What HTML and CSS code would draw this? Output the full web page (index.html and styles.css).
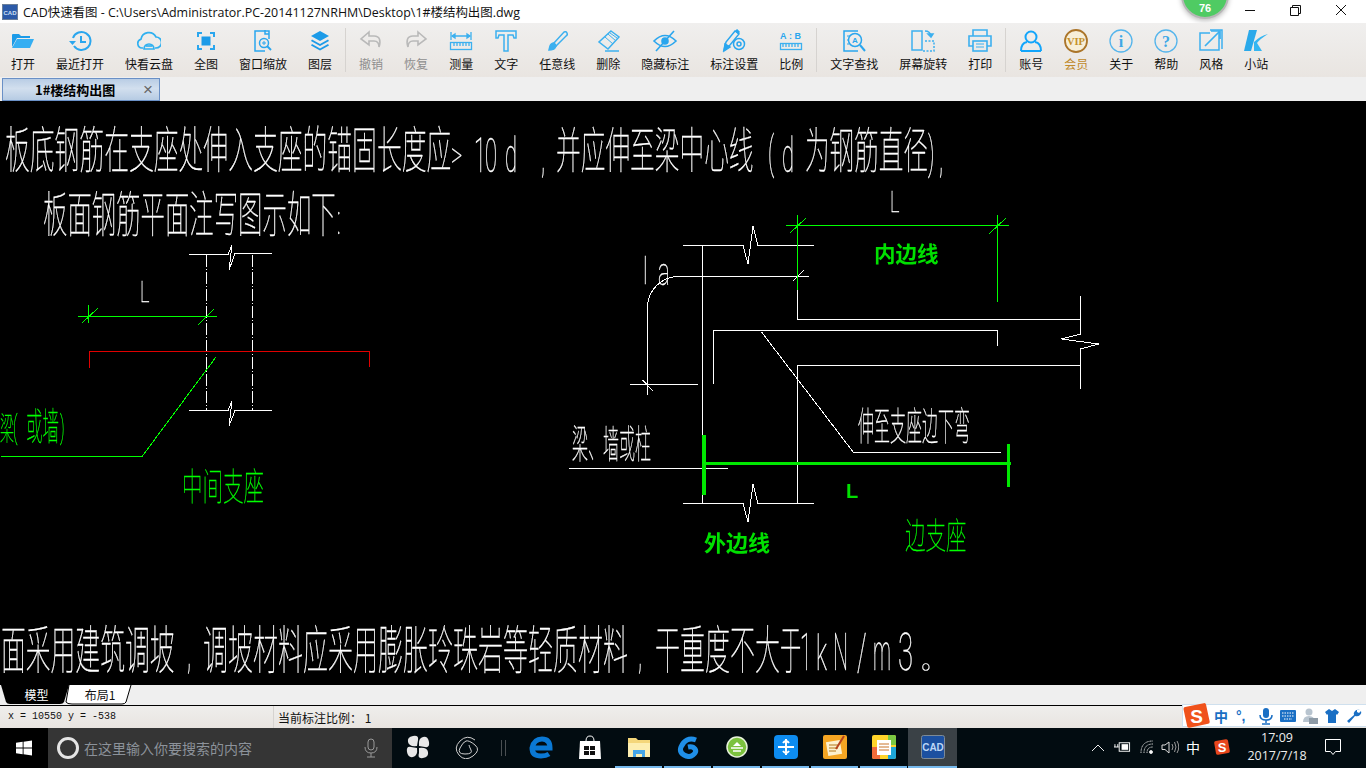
FILE: index.html
```html
<!DOCTYPE html>
<html lang="zh-CN">
<head>
<meta charset="utf-8">
<title>CAD快速看图</title>
<link rel="stylesheet" href="styles.css">
</head>
<body>
<div class="app">
  <header class="titlebar">
    <svg class="app-icon" viewBox="0 0 16 16"><rect x=".5" y=".5" width="15" height="15" fill="#2c5aa8" stroke="#6b7f99"/><text x="8" y="11" class="app-icon-text">CAD</text></svg>
    <span class="title">CAD快速看图 - C:\Users\Administrator.PC-20141127NRHM\Desktop\1#楼结构出图.dwg</span>
    <div class="badge"><span>76</span></div>
    <div class="winctl">
      <svg viewBox="0 0 46 20"><path d="M19 10.500h10" stroke="#111" fill="none"/></svg>
      <svg viewBox="0 0 46 20"><path d="M18.500 7.500h8v8h-8zM20.500 7.500v-2h8v8h-2" stroke="#111" fill="none"/></svg>
      <svg viewBox="0 0 46 20"><path d="M18 5l10 10M28 5L18 15" stroke="#111" fill="none"/></svg>
    </div>
  </header>

  <nav class="toolbar">
    <div class="group">
      <button class="tool"><svg viewBox="0 0 24 24"><path fill="#1c9be8" d="M1 6q0-1 1-1h6l2 2h9v2H6l-5 9z"/><path fill="#35aef2" d="M6 10h17l-4 9H1z"/></svg><span>打开</span></button>
      <button class="tool"><svg viewBox="0 0 24 24" fill="none" stroke="#2aa6ee" stroke-width="2"><path d="M5 9a9 9 0 1 1 1 8"/><path d="M1 12h7l-3.500 4z" fill="#2aa6ee" stroke="none"/><path d="M13 7v6h5"/></svg><span>最近打开</span></button>
      <button class="tool"><svg viewBox="0 0 24 24" fill="none" stroke="#2fb0f0" stroke-width="1.700"><path d="M6 19H5a4.500 4.500 0 0 1-1-8.800A8 8 0 0 1 19 8a5.500 5.500 0 0 1 0 11h-1"/><path d="M7 20a5 5 0 0 1 10 0z"/><path d="M9 17h6"/></svg><span>快看云盘</span></button>
      <button class="tool"><svg viewBox="0 0 24 24" fill="none" stroke="#2aa6ee" stroke-width="2"><path d="M4 8V4h4M16 4h4v4M20 16v4h-4M8 20H4v-4"/><rect x="7.500" y="7.500" width="9" height="9" fill="#1c9be8" stroke="none"/></svg><span>全图</span></button>
      <button class="tool"><svg viewBox="0 0 24 24" fill="none" stroke="#2aa6ee" stroke-width="1.500"><path d="M18 10V2H4v20h10"/><path d="M14 1v4h4" /><circle cx="13" cy="14" r="4.500"/><path d="M16 17l4 4" stroke-width="2"/><path d="M11 14h4M13 12v4" stroke-width="1"/></svg><span>窗口缩放</span></button>
      <button class="tool"><svg viewBox="0 0 24 24" fill="#1c9be8"><path d="M12 2l9 5-9 5-9-5z"/><path d="M4 10.500l8 4.500 8-4.500 1 1.500-9 5-9-5z"/><path d="M4 15l8 4.500 8-4.500 1 1.500-9 5-9-5z"/></svg><span>图层</span></button>
    </div>
    <div class="group">
      <button class="tool off"><svg viewBox="0 0 24 24" fill="none" stroke="#b9b9b9" stroke-width="1.600"><path d="M10 3L2 10l8 6v-4h5c3 0 5 2 5 6 2-6 1-11-5-11h-5z"/></svg><span>撤销</span></button>
      <button class="tool off"><svg viewBox="0 0 24 24" fill="none" stroke="#b9b9b9" stroke-width="1.600"><path d="M14 3l8 7-8 6v-4H9c-3 0-5 2-5 6-2-6-1-11 5-11h5z"/></svg><span>恢复</span></button>
      <button class="tool"><svg viewBox="0 0 24 24" fill="none" stroke="#3cb0ef" stroke-width="1.300"><path d="M2 3v8M22 3v8M3 7h18"/><path d="M3 7l3-2v4zM21 7l-3-2v4z" fill="#3cb0ef"/><rect x="1.500" y="13.500" width="21" height="7"/><path d="M5 14v3M8 14v3M11 14v3M14 14v3M17 14v3M20 14v3"/></svg><span>测量</span></button>
      <button class="tool"><svg viewBox="0 0 24 24" fill="none" stroke="#3cb0ef" stroke-width="1.500"><path d="M2 2h20v7h-2l-1-3h-5v16h-4V6H5L4 9H2z"/></svg><span>文字</span></button>
      <button class="tool"><svg viewBox="0 0 24 24" fill="none" stroke="#3cb0ef" stroke-width="1.500"><path d="M9 14L19 3q2-1 3 1t-1 3L11 17z"/><path d="M9 14q-3 0-4 3l-1 4q5 0 6-2l1-2z" fill="#3cb0ef"/></svg><span>任意线</span></button>
      <button class="tool"><svg viewBox="0 0 24 24" fill="none" stroke="#3cb0ef" stroke-width="1.500"><path d="M15 2l8 6-11 12-9-7z"/><path d="M9 8l8 7M12 5l8 7M14 4l7 5" stroke-width="1"/><path d="M9 22h14"/></svg><span>删除</span></button>
      <button class="tool"><svg viewBox="0 0 24 24" fill="none" stroke="#2aa6ee" stroke-width="1.600"><path d="M1 12q11-11 22 0-11 11-22 0z"/><circle cx="12" cy="12" r="3" fill="#2aa6ee"/><path d="M21 2L3 22"/></svg><span>隐藏标注</span></button>
      <button class="tool"><svg viewBox="0 0 24 24" fill="none" stroke="#2aa6ee" stroke-width="1.500"><path d="M2 21l2-8L13 2l4 3-9 11z" fill="none"/><path d="M2 22l1-7 5 3z" fill="#2aa6ee"/><path d="M14 1l3 3" stroke-width="3"/><circle cx="17" cy="15" r="5.500"/><circle cx="17" cy="15" r="2"/></svg><span>标注设置</span></button>
      <button class="tool"><svg viewBox="0 0 24 24" fill="none" stroke="#3cb0ef" stroke-width="1.300"><text x="1" y="9.500" class="ab">A:B</text><rect x="1.500" y="14.500" width="21" height="6"/><path d="M4 15v3M7 15v3M10 15v3M13 15v3M16 15v3M19 15v3"/></svg><span>比例</span></button>
    </div>
    <div class="group">
      <button class="tool"><svg viewBox="0 0 24 24" fill="none" stroke="#2aa6ee" stroke-width="1.500"><path d="M16 2H2v20h14"/><path d="M5 7h3M5 11h2M5 15h2" stroke-width="1"/><circle cx="13" cy="11" r="6.500"/><path d="M18 16l5 6" stroke-width="2"/><text x="10" y="14" class="finda">A</text></svg><span>文字查找</span></button>
      <button class="tool"><svg viewBox="0 0 24 24" fill="none" stroke="#3cb0ef" stroke-width="1.500"><rect x="1" y="2" width="10" height="19"/><path d="M14 12h9v10H12v-1" stroke-dasharray="2 1.500"/><path d="M14 2q5 0 6 5"/><path d="M17 5l3 3 2-3z" fill="#3cb0ef"/></svg><span>屏幕旋转</span></button>
      <button class="tool"><svg viewBox="0 0 24 24" fill="none" stroke="#3cb0ef" stroke-width="1.600"><path d="M5 7V1h14v6"/><path d="M5 17H1V7h22v10h-4"/><rect x="5" y="12" width="14" height="10"/><path d="M8 15h8M8 18h8" stroke-width="1"/></svg><span>打印</span></button>
    </div>
    <div class="group last">
      <button class="tool"><svg viewBox="0 0 24 24" fill="none" stroke="#12a5fb" stroke-width="2"><circle cx="12" cy="8" r="5.500"/><path d="M2 22q0-8 6-9M22 22q0-8-6-9M2 22h20"/></svg><span>账号</span></button>
      <button class="tool vip"><svg viewBox="0 0 24 24"><circle cx="12" cy="12" r="11" fill="#f7efd9" stroke="#ab752a" stroke-width="1.800"/><text x="12" y="15.500" class="viptext">VIP</text></svg><span>会员</span></button>
      <button class="tool"><svg viewBox="0 0 24 24" fill="none" stroke="#55b5ec" stroke-width="1.300"><circle cx="12" cy="12" r="11"/><text x="12" y="18" class="itext">i</text></svg><span>关于</span></button>
      <button class="tool"><svg viewBox="0 0 24 24" fill="none" stroke="#55b5ec" stroke-width="1.300"><circle cx="12" cy="12" r="11"/><text x="12" y="18" class="qtext">?</text></svg><span>帮助</span></button>
      <button class="tool"><svg viewBox="0 0 24 24" fill="none" stroke="#3cb0ef" stroke-width="1.500"><path d="M11 1h12v19"/><path d="M20 4v17H1V4h10"/><path d="M6 17L20 3M12 2h9v8" stroke-width="1.700"/></svg><span>风格</span></button>
      <button class="tool"><svg viewBox="0 0 24 24"><path fill="#2aa9ea" d="M5 1h8L7 22H0z"/><path fill="#35b6f2" d="M10 13Q16 7 24 5 16 10 13 14l5 8h-8z"/></svg><span>小站</span></button>
    </div>
  </nav>

  <div class="doctabs">
    <div class="doctab"><b>1#楼结构出图</b><i>×</i></div>
  </div>

  <main class="canvas">
    <svg class="drawing" viewBox="0 101 1366 584">
      <g class="cad-text">
        <text transform="translate(5 168) scale(1 2)" font-size="24.800">板底钢筋在支座处伸入支座的锚固长度应</text>
        <text class="latin" transform="translate(451 168) scale(1 1.700)" font-size="22">&gt;</text>
        <text class="latin" transform="translate(474 172) scale(.95 2.1)" font-size="23">1</text>
        <text class="latin" transform="translate(485 172) scale(.95 2.1)" font-size="23">0</text>
        <text class="latin" transform="translate(505 172) scale(.95 2.1)" font-size="23">d</text>
        <text class="latin" transform="translate(541 172) scale(.95 2.100)" font-size="23">,</text>
        <text transform="translate(556 168) scale(1 2)" font-size="24.700">并应伸至梁中心线</text>
        <text class="latin" transform="translate(768 168) scale(1 2.1)" font-size="21">(</text>
        <text class="latin" transform="translate(782 172) scale(.95 2.1)" font-size="23">d</text>
        <text transform="translate(805 168) scale(1 2)" font-size="24.600">为钢筋直径</text>
        <text class="latin" transform="translate(928 168) scale(1 2.1)" font-size="21">)</text>
        <text class="latin" transform="translate(939 172) scale(.95 2.100)" font-size="23">,</text>

        <text transform="translate(43 232) scale(1 2)" font-size="24.400">板面钢筋平面注写图示如下</text>
        <text class="latin" transform="translate(337 234) scale(1 2)" font-size="20">:</text>

        <text transform="translate(1 669) scale(1 2.1)" font-size="24.800">面采用建筑调坡</text>
        <text class="latin" transform="translate(187 668) scale(.95 2.100)" font-size="23">,</text>
        <text transform="translate(203 669) scale(1 2.1)" font-size="25">调坡材料应采用膨胀玲珠岩等轻质材料</text>
        <text class="latin" transform="translate(638 668) scale(.95 2.100)" font-size="23">,</text>
        <text transform="translate(655 669) scale(1 2.1)" font-size="25">干重度不大</text>
        <text transform="translate(780 669) scale(.85 2.1)" font-size="25">于</text>
        <text class="latin" transform="translate(800 670) scale(.85 2.100)" font-size="25">1</text>
        <text class="latin" transform="translate(816 670) scale(1 2.100)" font-size="23">k</text>
        <text class="latin" transform="translate(833 670) scale(.85 2.100)" font-size="25">N</text>
        <text class="latin" transform="translate(857 670) scale(1 2.100)" font-size="25">/</text>
        <text class="latin" transform="translate(873 670) scale(.8 2.100)" font-size="25">m</text>
        <text class="latin" transform="translate(898 670) scale(1.100 2.100)" font-size="25">3</text>
        <text transform="translate(921 669) scale(1 1)" font-size="25">。</text>

        <text transform="translate(858 440) scale(1 2.4)" font-size="16">伸至支座边下弯</text>
        <text transform="translate(572 458) scale(1 2.4)" font-size="16">梁、</text>
        <text transform="translate(603 458) scale(1 2.4)" font-size="16">墙或柱</text>

        <text class="latin" transform="translate(140 302) scale(.8 1.300)" font-size="23">L</text>
        <text class="latin" transform="translate(890 212) scale(.8 1.300)" font-size="23">L</text>
        <text class="latin" transform="translate(643 284) scale(1 1.700)" font-size="22">l</text>
        <text class="latin" transform="translate(658 285) scale(1 1.800)" font-size="22">a</text>
      </g>
      <g class="cad-text green">
        <text transform="translate(0 440) scale(1 2.3)" font-size="14">梁</text>
        <text class="latin" transform="translate(13 438) scale(1 2.1)" font-size="15">(</text>
        <text transform="translate(26 440) scale(1 2.3)" font-size="16.500">或墙</text>
        <text class="latin" transform="translate(60 438) scale(1 2.1)" font-size="15">)</text>
        <text transform="translate(182 500) scale(1 1.850)" font-size="20.500">中间支座</text>
        <text transform="translate(905 549) scale(1 1.750)" font-size="20.500">边支座</text>
      </g>
      <g class="bold-green">
        <text x="874" y="262" font-size="21.500">内边线</text>
        <text x="704" y="551" font-size="22">外边线</text>
        <text class="bold-l" x="846" y="498" font-size="20">L</text>
      </g>

      <g class="lines white">
        <path d="M189 254.500H228L232 245 229 270 235 253.500H272"/>
        <path d="M189 410.500H228L232 401 229 426 235 410.500H272"/>
        <path class="dash" d="M206.500 255V410M252.500 255V410"/>
        <path d="M683 245.500H743L748 264 753 226 758 245.500H814"/>
        <path d="M683 503.500H743L748 522 753 484 758 503.500H814"/>
        <path d="M702.500 245V503M797.500 290V319.500H1080.500M797.500 503V365.500H1080.500"/>
        <path d="M1080.500 296V334L1061.500 339 1098.500 344 1080.500 349V389"/>
        <path d="M713.500 384V330.500H997.500V346"/>
        <path d="M761.500 332L853.500 452.500H1001"/>
        <path d="M569 468.500H728"/>
        <path d="M808.500 276.500H678.500A31 31 0 0 0 647.500 307V395"/>
        <path d="M793 281L804 270M630 384.500H698M642.500 380L653 391"/>
      </g>
      <g class="lines green-line">
        <path d="M78 316.500H217M88.500 305V323M82 323L98 308M198 325L214 309"/>
        <path d="M1 456.500H142L216 357"/>
        <path d="M786 225.500H1009M797.500 215V290M997.500 215V302M790 233L806 218M989 234L1006 218"/>
      </g>
      <path class="lines red-line" d="M89.500 368V351.500H369.500V367"/>
      <g class="lines thick">
        <path d="M704 435V495" stroke-width="4"/>
        <path d="M704 463.500H1011" stroke-width="3"/>
        <path d="M1008 444V487" stroke-width="3"/>
      </g>
    </svg>
  </main>

  <div class="layouttabs">
    <svg class="layout-shape" viewBox="0 0 140 21">
      <path d="M1 0L6 17Q7 19 10 19H60Q63 19 64 17L69 0z" fill="#000"/>
      <path d="M69 0L66 17Q67 19 72 19H122Q125 19 126 17L131 0" fill="#fff" stroke="#000"/>
    </svg>
    <span class="lt active">模型</span>
    <span class="lt">布局1</span>
  </div>

  <footer class="status">
    <span class="coords">x = 10550 y = -538</span>
    <span class="scale">当前标注比例： 1</span>
  </footer>

  <div class="taskbar">
    <div class="start"><svg viewBox="0 0 18 18" fill="#fff"><path d="M0 3l7.500-1v6.500H0zM8.500 1.900L18 .5v8H8.500zM0 9.500h7.500V16L0 15zM8.500 9.500H18v8l-9.500-1.400z"/></svg></div>
    <div class="search">
      <span class="ring"></span>
      <span class="search-text">在这里输入你要搜索的内容</span>
      <svg class="mic" viewBox="0 0 14 20" fill="none" stroke="#9a9a9a"><rect x="4" y="1" width="6" height="11" rx="3"/><path d="M1 9q0 6 6 6t6-6M7 15v4M3 19h8"/></svg>
    </div>
    <div class="task"><svg viewBox="0 0 24 24" fill="#e8e8e8"><path d="M11 11Q3 12 2 7t5-6 5 4zM13 11Q12 3 17 2t6 5-4 5zM13 13q8-1 9 4t-5 6-4-5zM11 13q1 8-4 9t-6-5 4-5z"/></svg></div>
    <div class="task"><svg viewBox="0 0 24 24" fill="none" stroke="#cfcfcf"><path d="M20 5Q12-1 5 6t-1 14 14 1 2-11-9-4-6 7 5 6 6-4-2-5"/></svg></div>
    <div class="task-sep"></div>
    <div class="task"><svg viewBox="0 0 24 24"><path fill="none" stroke="#0a78d4" stroke-width="5" d="M4 13h17q0-9-8-9T3 13q0 8 9 8 5 0 8-2"/></svg></div>
    <div class="task"><svg viewBox="0 0 24 24"><path fill="#fff" d="M2 6h20l1 18H1z"/><path fill="none" stroke="#fff" d="M8 6q0-5 4-5t4 5"/><path fill="#111" d="M6 11h5v4H6zM12 11h5v4h-5zM6 16h5v4H6zM12 16h5v4h-5z"/></svg></div>
    <div class="task on"><svg viewBox="0 0 24 24"><path fill="#f4d67a" d="M1 3h8l2 2h12v17H1z"/><path fill="#fdeeb0" d="M1 8h22v14H1z"/><path fill="#46a6e8" d="M6 15h12v7h-3v-3H9v3H6z"/></svg></div>
    <div class="task on"><svg viewBox="0 0 24 24"><path fill="none" stroke="#1f8fe8" stroke-width="5" d="M20 5q-5-2-9 0t-6 7 3 8 9 0 2-6-7-2"/></svg></div>
    <div class="task on split"><svg viewBox="0 0 24 24"><circle cx="12" cy="12" r="10" fill="#7cc23e" stroke="#e8f3dc" stroke-width="1.500"/><path d="M6 13h12M8 16h8" stroke="#fff" stroke-width="1.500"/><path d="M12 7l4 4H8z" fill="#fff"/></svg></div>
    <div class="task on"><svg viewBox="0 0 24 24"><rect width="24" height="24" rx="4" fill="#0d8cf0"/><path d="M12 4v16M4 12h16M9 8q3-4 6 0M9 16q3 4 6 0" fill="none" stroke="#fff" stroke-width="2"/></svg></div>
    <div class="task on"><svg viewBox="0 0 24 24"><rect width="24" height="24" rx="2" fill="#f5a623"/><rect x="4" y="6" width="14" height="14" fill="#fdf1cf" transform="rotate(-10 11 13)"/><path d="M6 10h9M6 13h9M6 16h7" stroke="#b3761a"/><path d="M21 1L13 14" stroke="#b6431d" stroke-width="2"/></svg></div>
    <div class="task on"><svg viewBox="0 0 24 24"><rect width="24" height="24" rx="2" fill="#ffd42a"/><path d="M0 12h8v12H2q-2 0-2-2z" fill="#f26b3a"/><path d="M16 0h6q2 0 2 2v8h-8z" fill="#7ac943"/><path d="M16 12h8v10q0 2-2 2h-6z" fill="#1ea7d8"/><rect x="5" y="5" width="14" height="15" fill="#fff"/><path d="M7 9h10M7 12h10M7 15h10" stroke="#c9752a"/></svg></div>
    <div class="task active"><svg viewBox="0 0 24 24"><rect x=".5" y=".5" width="23" height="23" rx="2" fill="#1c50a0" stroke="#7d8a96"/><text x="12" y="16" class="cad-mini">CAD</text></svg></div>

    <div class="tray">
      <svg class="t1" viewBox="0 0 14 8" fill="none" stroke="#eee"><path d="M1 7l6-6 6 6"/></svg>
      <svg class="t2" viewBox="0 0 18 12" fill="none" stroke="#fff"><rect x="5.500" y="1.500" width="11" height="9"/><rect x="8" y="3" width="7" height="6" fill="#fff" stroke="none"/><path d="M0 6h5M1 3v3M4 3v3" /></svg>
      <svg class="t3" viewBox="0 0 14 14" fill="none" stroke="#ddd"><path d="M1 13Q1 1 13 1M4 13Q4 4 13 4M7 13Q7 7 13 7" stroke-dasharray="1 .5"/><circle cx="11" cy="12" r="1.500" fill="#fff"/></svg>
      <svg class="t4" viewBox="0 0 18 14" fill="none" stroke="#ddd"><path d="M1 5h3l4-3v11L4 9.500H1z"/><path d="M11 4q2 3 0 6M13.500 2q3 5 0 10M16 1q3.500 6 0 12" stroke="#999"/></svg>
      <span class="ime">中</span>
      <svg class="t5" viewBox="0 0 16 16"><rect x="1" y="1" width="14" height="14" rx="2" fill="#e8461c" transform="rotate(-10 8 8)"/><text x="8" y="13" class="s-logo">S</text></svg>
      <div class="clock"><span>17:09</span><span>2017/7/18</span></div>
      <svg class="t6" viewBox="0 0 18 18" fill="none" stroke="#fff"><path d="M1.500 1.500h15v12h-5l-2.500 3-2.500-3h-5z"/></svg>
    </div>
  </div>

  <div class="sogou">
    <svg class="sg-logo" viewBox="0 0 27 27"><rect x="2" y="3" width="23" height="21" rx="2" fill="#f0521b" transform="rotate(-12 13 13)"/><text x="13.500" y="21" class="sg-s">S</text></svg>
    <span class="sg-zh">中</span>
    <span class="sg-p">°,</span>
    <svg viewBox="0 0 16 18" class="sg-i"><rect x="5" y="1" width="6" height="10" rx="3" fill="#1a6fc4"/><path d="M2 8q0 5 6 5t6-5M8 13v3M4 17h8" fill="none" stroke="#1a6fc4" stroke-width="1.500"/></svg>
    <svg viewBox="0 0 16 18" class="sg-i"><rect y="3" width="16" height="12" rx="1" fill="#1a6fc4"/><path d="M2 6h12M2 9h12M4 12h8" stroke="#fff" stroke-dasharray="1.500 1"/></svg>
    <svg viewBox="0 0 16 18" class="sg-i"><circle cx="7" cy="5" r="3.500" fill="#b8c4cf"/><path d="M1 15q0-6 6-6t5 6z" fill="#b8c4cf"/><rect x="7" y="11" width="9" height="6" fill="#8d9aa6"/></svg>
    <svg viewBox="0 0 16 18" class="sg-i"><path d="M5 2L1 5l2 3 1-1v9h8V7l1 1 2-3-4-3-3 2z" fill="#1a6fc4"/></svg>
    <svg viewBox="0 0 16 18" class="sg-i"><path d="M14 3q-3-1-5 1t-1 4l-7 6 2 2 6-7q3 1 5-1t1-4l-2 2-2-1V3z" fill="#1a6fc4"/></svg>
  </div>
</div>
</body>
</html>
```
FILE: styles.css
```css
* { box-sizing: border-box; }
html, body { margin: 0; height: 768px; overflow: hidden; background: #000; }
body { font-family: "Noto Sans CJK SC", "Liberation Sans", sans-serif; font-size: 12px; color: #111; }
.app { position: relative; width: 1366px; height: 768px; display: flex; flex-direction: column; overflow: hidden; }

.titlebar { height: 23px; background: #fff; display: flex; align-items: center; padding-left: 2px; position: relative; overflow: hidden; flex: none; }
.app-icon { width: 16px; height: 16px; flex: none; }
.app-icon-text { font: bold 6px "Liberation Sans", sans-serif; fill: #cfe0f5; text-anchor: middle; }
.title { margin-left: 5px; font: 12.450px "Open Sans", "Noto Sans CJK SC", sans-serif; white-space: nowrap; color: #111; }
.badge { position: absolute; left: 1181px; top: -29px; width: 48px; height: 48px; border-radius: 50%; background: #4fcb63; border: 2px solid #b7b7b7; box-shadow: 0 2px 5px rgba(0,0,0,.25); display: flex; align-items: flex-end; justify-content: center; }
.badge span { color: #fff; font: bold 11px "Liberation Sans", sans-serif; padding-bottom: 3px; }
.winctl { position: absolute; right: 2px; top: 0; display: flex; }
.winctl svg { width: 46px; height: 20px; display: block; }

.toolbar { height: 54px; flex: none; display: flex; padding: 5px 0 0 11px; background: linear-gradient(#f0efee, #e9e5e1); }
.group { display: flex; gap: 21px; height: 44px; padding-right: 13px; margin-right: 13px; border-right: 1px solid #d6d3d0; }
.group.last { border-right: 0; }
.tool { border: 0; background: none; padding: 0; margin: 0; font: inherit; color: #111; display: flex; flex-direction: column; align-items: center; width: auto; height: 44px; position: relative; }
.tool svg { width: 24px; height: 24px; flex: none; margin-top: 1px; }
.tool span { font-size: 12px; line-height: 16px; margin-top: 3px; white-space: nowrap; }
.tool.off span { color: #8e8e8e; }
.tool.vip span { color: #c08a2b; }
.ab { font: bold 9px "Liberation Sans", sans-serif; fill: #2aa6ee; stroke: none; letter-spacing: 2.500px; }
.finda { font: bold 8px "Liberation Sans", sans-serif; fill: #2aa6ee; stroke: none; }
.viptext { font: bold 10.500px "Liberation Serif", serif; fill: #c5902a; text-anchor: middle; }
.itext, .qtext { font: bold 16px "Liberation Serif", serif; fill: #3ea8e6; stroke: none; text-anchor: middle; }

.doctabs { height: 24px; flex: none; background: #efefef; padding: 1px 0 0 2px; }
.doctab { width: 158px; height: 23px; border: 1px solid #6a90c6; background: linear-gradient(#b9cde5, #d2dfee 45%, #b6cbe3); display: flex; align-items: center; position: relative; padding-left: 32px; }
.doctab b { font-size: 13px; font-weight: 700; color: #000; }
.doctab i { position: absolute; right: 6px; top: 1px; font: normal 17px/19px "Liberation Sans", sans-serif; color: #666; }

.canvas { flex: 1; background: #000; min-height: 0; }
.drawing { display: block; width: 1366px; height: 584px; will-change: transform; }
.cad-text text { fill: #fff; font-family: "Noto Sans CJK SC", sans-serif; font-weight: 100; stroke: #fff; stroke-width: .15px; }
.cad-text text.latin { font-family: Roboto, "Liberation Sans", sans-serif; font-weight: 100; stroke-width: .2px; }
.cad-text.green text { fill: #00ff00; stroke: #00ff00; }
.bold-green text { fill: #00e000; font-family: "Noto Sans CJK SC", sans-serif; font-weight: 700; }
.bold-green text.bold-l { font-family: "Liberation Sans", sans-serif; }
.lines { fill: none; shape-rendering: crispEdges; }
.white path { stroke: #fff; stroke-width: 1; }
.white path.dash { stroke-dasharray: 12 2 1 2; }
.green-line path { stroke: #00ff00; stroke-width: 1; }
.red-line { stroke: #e00000; stroke-width: 1; }
.thick path { stroke: #00e800; }

.layouttabs { height: 21px; flex: none; background: #efefef; border-bottom: 1px solid #000; display: flex; position: relative; }
.layout-shape { position: absolute; left: 0; top: 0; width: 140px; height: 21px; }
.lt { position: relative; text-align: center; line-height: 19px; font-size: 12px; color: #111; width: 60px; }
.lt.active { color: #fff; width: 70px; padding-left: 3px; }

.status { height: 22px; flex: none; background: linear-gradient(#efeeec, #e8e4e0); display: flex; align-items: center; }
.coords { width: 274px; padding-left: 8px; font: 10px "Liberation Mono", monospace; color: #111; height: 22px; line-height: 22px; border-right: 1px solid #d6d3d0; }
.scale { padding-left: 4px; font-size: 12px; }

.taskbar { height: 40px; flex: none; background: #020c11; display: flex; align-items: stretch; }
.start { width: 48px; background: #000; display: flex; align-items: center; justify-content: center; }
.start svg { width: 16px; height: 16px; }
.search { width: 344px; background: #353535; display: flex; align-items: center; padding-left: 9px; position: relative; margin-right: 1px; }
.ring { width: 22px; height: 22px; border: 3px solid #e4e4e4; border-radius: 50%; }
.search-text { margin-left: 5px; font-size: 14px; color: #8c929a; }
.mic { position: absolute; left: 316px; top: 10px; width: 14px; height: 20px; }
.task { width: 49px; display: flex; align-items: center; justify-content: center; position: relative; padding-bottom: 2px; }
.task svg { width: 24px; height: 24px; }
.task-sep { width: 25px; position: relative; }
.task-sep::after { content: ""; position: absolute; left: 10px; top: 12px; height: 16px; width: 3px; border-inline: 1px solid #4a4f52; }
.task.on::after { content: ""; position: absolute; left: 1px; right: 1px; bottom: 0; height: 2px; background: #76b9ed; }
.task.active { background: #3a4146; }
.task.active::after { content: ""; position: absolute; left: 0; right: 0; bottom: 0; height: 2px; background: #76b9ed; }
.cad-mini { font: bold 10px "Liberation Sans", sans-serif; fill: #bcd6f5; text-anchor: middle; }

.tray { flex: 1; position: relative; color: #fff; }
.tray svg, .ime, .clock { position: absolute; }
.t1 { left: 134px; top: 16px; width: 14px; height: 8px; }
.t2 { left: 157px; top: 13px; width: 17px; height: 12px; }
.t3 { left: 183px; top: 12px; width: 14px; height: 14px; }
.t4 { left: 204px; top: 12px; width: 18px; height: 14px; }
.ime { left: 229px; top: 9px; font-size: 14px; line-height: 20px; }
.t5 { left: 257px; top: 11px; width: 16px; height: 16px; }
.s-logo { font: bold 13px "Liberation Sans", sans-serif; fill: #fff; text-anchor: middle; }
.clock { left: 285px; top: 1px; width: 70px; display: flex; flex-direction: column; align-items: center; font: 12.500px/18px "Open Sans", sans-serif; color: #eee; }
.t6 { left: 367px; top: 10px; width: 18px; height: 18px; }

.sogou { position: absolute; left: 1182px; top: 704px; width: 184px; height: 23px; background: #fff; border: 1px solid #cfe0ee; border-right: 0; display: flex; align-items: center; gap: 6px; padding-left: 31px; }
.sg-logo { position: absolute; left: 0; top: -3px; width: 27px; height: 27px; }
.sg-s { font: bold 19px "Liberation Sans", sans-serif; fill: #fff; text-anchor: middle; }
.sg-zh { font-size: 14px; font-weight: 700; color: #1a6fc4; width: 16px; }
.sg-p { font: bold 14px/14px "Liberation Sans", sans-serif; color: #1a6fc4; width: 16px; }
.sg-i { width: 16px; height: 18px; flex: none; }
```
